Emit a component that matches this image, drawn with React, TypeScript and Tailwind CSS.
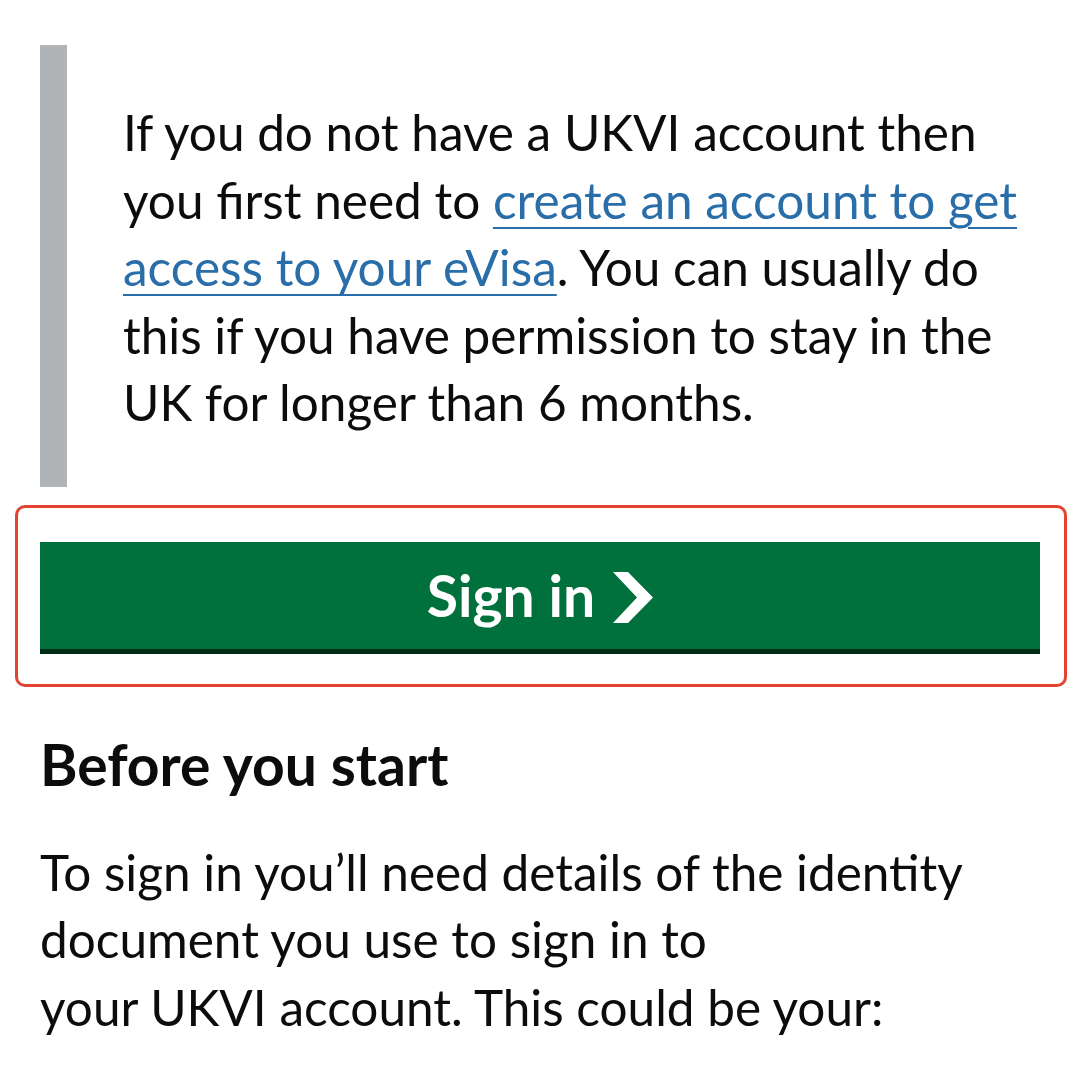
export default function App() {
  return (
    <div className="w-[1080px] h-[1080px] overflow-hidden bg-white text-[#0b0c0c] font-['Lato',sans-serif]">
      <div className="px-[40px] pt-[45px]">
        {/* Inset text */}
        <div className="border-l-[27px] border-[#b1b4b6] pl-[56px] pt-[54px] pb-[50px] text-[49.5px] leading-[67.5px]">
          If you do not have a UKVI account then
          <br />
          you first need to{" "}
          <a href="#" className="text-[#2a6ea9] underline decoration-[2px] underline-offset-[8px]">
            create an account to get
            <br />
            access to your eVisa
          </a>
          . You can usually do
          <br />
          this if you have permission to stay in the
          <br />
          UK for longer than 6 months.
        </div>

        {/* Sign in button, outlined */}
        <div className="relative mt-[55px]">
          <div className="absolute -left-[25px] -right-[27px] -top-[37px] -bottom-[38px] rounded-[10px] border-[3px] border-[#e4432f] pointer-events-none" />
          <button className="flex h-[107px] w-full items-center justify-center gap-[18px] bg-[#00703c] text-white shadow-[0_5px_0_#002d18]">
            <span className="text-[57px] font-bold leading-none">Sign in</span>
            <svg width="40" height="51" viewBox="0 0 40 51" className="mt-[4px]">
              <polygon points="0,0 15,0 40,25.5 15,51 0,51 24,25.5" fill="white" />
            </svg>
          </button>
        </div>

        {/* Before you start */}
        <h2 className="mt-[85px] text-[57px] font-bold leading-[60px]">Before you start</h2>
        <p className="mt-[45px] text-[49.5px] leading-[67.5px]">
          To sign in you’ll need details of the identity
          <br />
          document you use to sign in to
          <br />
          your UKVI account. This could be your:
        </p>
      </div>
    </div>
  );
}
